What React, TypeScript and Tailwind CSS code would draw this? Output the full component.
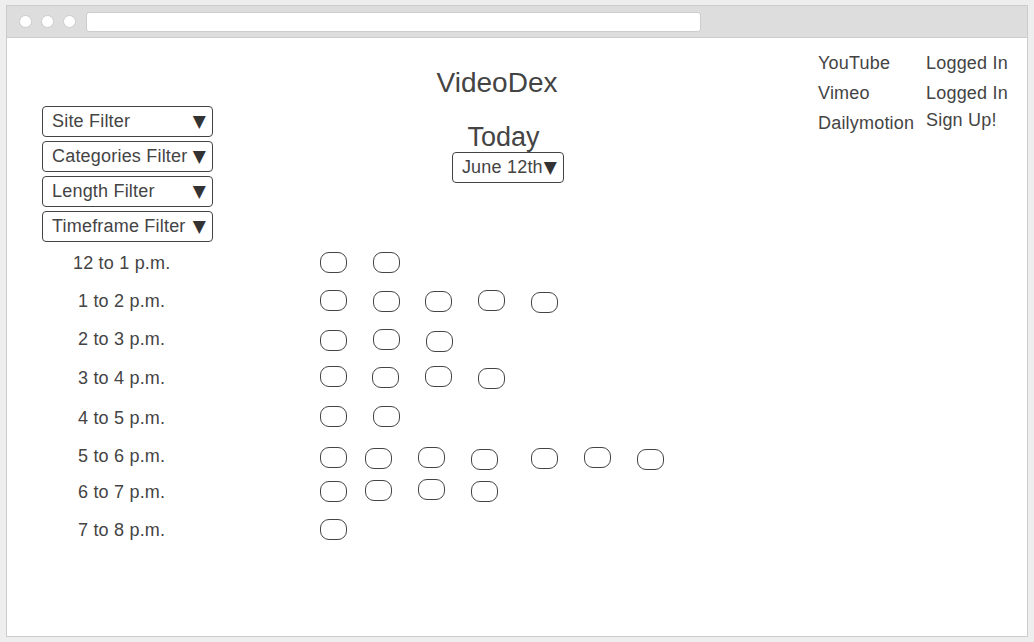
import React from 'react';

const FILTERS = ['Site Filter', 'Categories Filter', 'Length Filter', 'Timeframe Filter'];

// each slot: left margin + top offset inside its row, copied from the sketch
const ROWS = [
    { label: '12 to 1 p.m.', pad: 'pl-[66px]', h: 'h-[38px]', pills: ['ml-0 mt-[8px]', 'ml-[26px] mt-[8px]'] },
    { label: '1 to 2 p.m.', pad: 'pl-[71px]', h: 'h-[38px]', pills: ['ml-0 mt-[8px]', 'ml-[26px] mt-[9px]', 'ml-[25px] mt-[9px]', 'ml-[26px] mt-[8px]', 'ml-[26px] mt-[10px]'] },
    { label: '2 to 3 p.m.', pad: 'pl-[71px]', h: 'h-[38px]', pills: ['ml-0 mt-[10px]', 'ml-[26px] mt-[9px]', 'ml-[26px] mt-[11px]'] },
    { label: '3 to 4 p.m.', pad: 'pl-[71px]', h: 'h-[40px]', pills: ['ml-0 mt-[8px]', 'ml-[25px] mt-[9px]', 'ml-[26px] mt-[8px]', 'ml-[26px] mt-[10px]'] },
    { label: '4 to 5 p.m.', pad: 'pl-[71px]', h: 'h-[41px]', pills: ['ml-0 mt-[8px]', 'ml-[26px] mt-[8px]'] },
    { label: '5 to 6 p.m.', pad: 'pl-[71px]', h: 'h-[34px]', pills: ['ml-0 mt-[8px]', 'ml-[18px] mt-[9px]', 'ml-[26px] mt-[8px]', 'ml-[26px] mt-[10px]', 'ml-[33px] mt-[9px]', 'ml-[26px] mt-[8px]', 'ml-[26px] mt-[10px]'] },
    { label: '6 to 7 p.m.', pad: 'pl-[71px]', h: 'h-[38px]', pills: ['ml-0 mt-[8px]', 'ml-[18px] mt-[7px]', 'ml-[26px] mt-[6px]', 'ml-[26px] mt-[8px]'] },
    { label: '7 to 8 p.m.', pad: 'pl-[71px]', h: 'h-[38px]', pills: ['ml-0 mt-[8px]'] },
];

const Arrow = () => <span className="font-['DejaVu_Sans',sans-serif] text-[17px] leading-none text-[#333]">▼</span>;

export default function App() {
    return (
        <div className="w-[1034px] h-[642px] bg-[#eeeeee] pt-[5px] px-[6px] pb-[5px] font-['Liberation_Sans',Arial,sans-serif] text-[#444]">
            <div className="h-full flex flex-col bg-white border border-[#cccccc]">
                {/* Browser chrome */}
                <div className="h-[32px] shrink-0 bg-[#dddddd] border-b border-[#cccccc] flex items-center pl-[12px]">
                    <div className="flex gap-[9px]">
                        <div className="w-[13px] h-[13px] rounded-full bg-white border border-[#cccccc]" />
                        <div className="w-[13px] h-[13px] rounded-full bg-white border border-[#cccccc]" />
                        <div className="w-[13px] h-[13px] rounded-full bg-white border border-[#cccccc]" />
                    </div>
                    <div className="ml-[10px] w-[615px] h-[20px] bg-white rounded-[3px] border border-[#cccccc]" />
                </div>

                {/* Page */}
                <div className="flex-1">
                    <div className="flex items-start">
                        <div className="ml-[35px] mt-[68px] w-[171px] flex flex-col gap-[4px]">
                            {FILTERS.map((f) => (
                                <div key={f} className="h-[31px] border border-[#444] rounded-[4px] flex items-center justify-between pl-[9px] pr-[6px] text-[18px] tracking-[0.2px]">
                                    <span>{f}</span>
                                    <Arrow />
                                </div>
                            ))}
                        </div>

                        <div className="w-[568px] flex flex-col items-center">
                            <div className="mt-[29px] text-[28px] leading-[32px]">VideoDex</div>
                            <div className="mt-[22px] ml-[13px] text-[27px] leading-[32px]">Today</div>
                            <div className="-mt-[1px] ml-[22px] h-[31px] border border-[#444] rounded-[4px] flex items-center gap-[1px] pl-[9px] pr-[6px] text-[18px] tracking-[0.2px]">
                                <span>June 12th</span>
                                <Arrow />
                            </div>
                        </div>

                        <div className="ml-[37px] mt-[10px] flex text-[18px] leading-[30px] tracking-[0.2px]">
                            <div className="w-[108px] flex flex-col">
                                <span>YouTube</span>
                                <span>Vimeo</span>
                                <span>Dailymotion</span>
                            </div>
                            <div className="flex flex-col">
                                <span>Logged In</span>
                                <span>Logged In</span>
                                <span className="-mt-[3px]">Sign Up!</span>
                            </div>
                        </div>
                    </div>

                    {/* Timeline */}
                    <div className="mt-[2px] flex flex-col">
                        {ROWS.map((row) => (
                            <div key={row.label} className={`flex ${row.h}`}>
                                <div className={`w-[313px] shrink-0 flex items-center text-[18px] tracking-[0.2px] ${row.pad}`}>{row.label}</div>
                                {row.pills.map((p, i) => (
                                    <div key={i} className={`w-[27px] h-[21px] shrink-0 rounded-[9px] border-[1.3px] border-[#444] ${p}`} />
                                ))}
                            </div>
                        ))}
                    </div>
                </div>
            </div>
        </div>
    );
}
